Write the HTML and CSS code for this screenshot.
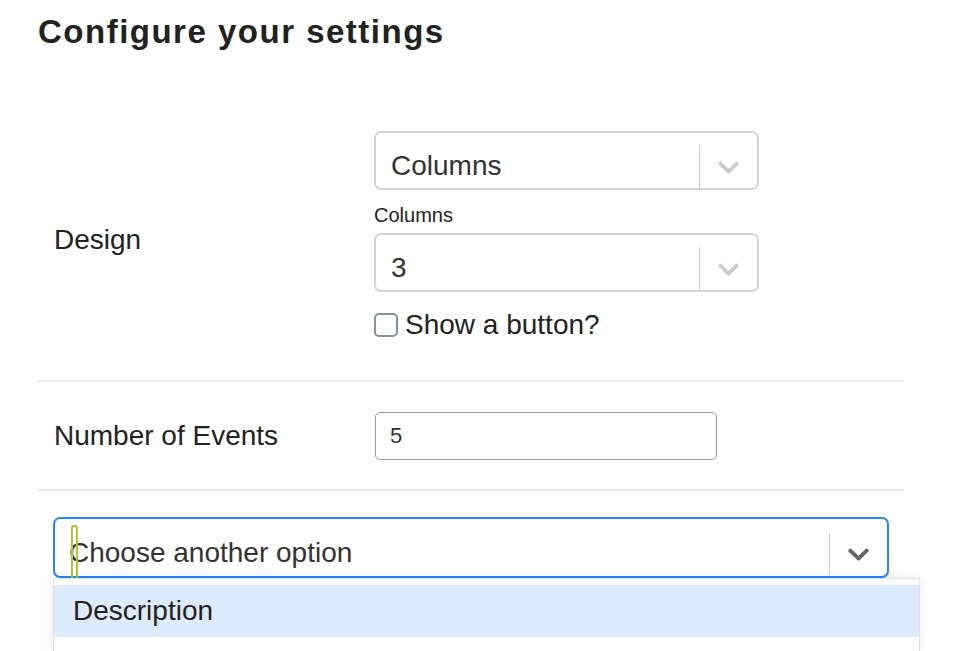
FILE: index.html
```html
<!DOCTYPE html>
<html lang="en">
<head>
    <meta charset="UTF-8">
    <meta name="viewport" content="width=device-width, initial-scale=1.0">
    <title>Configure your settings</title>
    <link rel="stylesheet" href="styles.css">
</head>
<body>
    <div class="page">
        <h1>Configure your settings</h1>

        <div class="settings">
            <div class="row">
                <div class="row-label">Design</div>
                <div class="field">
                    <div class="select">
                        <div class="select-value">Columns</div>
                        <span class="select-sep"></span>
                        <span class="select-arrow">
                            <svg viewBox="0 0 20 20"><path d="M4.516 7.548c0.436-0.446 1.043-0.481 1.576 0l3.908 3.747 3.908-3.747c0.533-0.481 1.141-0.446 1.574 0 0.436 0.445 0.408 1.197 0 1.615-0.406 0.418-4.695 4.502-4.695 4.502-0.217 0.223-0.502 0.335-0.787 0.335s-0.57-0.112-0.789-0.335c0 0-4.287-4.084-4.695-4.502s-0.436-1.17 0-1.615z"/></svg>
                        </span>
                    </div>
                    <label class="small-label">Columns</label>
                    <div class="select">
                        <div class="select-value">3</div>
                        <span class="select-sep"></span>
                        <span class="select-arrow">
                            <svg viewBox="0 0 20 20"><path d="M4.516 7.548c0.436-0.446 1.043-0.481 1.576 0l3.908 3.747 3.908-3.747c0.533-0.481 1.141-0.446 1.574 0 0.436 0.445 0.408 1.197 0 1.615-0.406 0.418-4.695 4.502-4.695 4.502-0.217 0.223-0.502 0.335-0.787 0.335s-0.57-0.112-0.789-0.335c0 0-4.287-4.084-4.695-4.502s-0.436-1.17 0-1.615z"/></svg>
                        </span>
                    </div>
                    <label class="check">
                        <input type="checkbox">
                        <span>Show a button?</span>
                    </label>
                </div>
            </div>

            <div class="row">
                <div class="row-label">Number of Events</div>
                <div class="field">
                    <input class="number" type="text" value="5">
                </div>
            </div>

            <div class="row row-wide">
                <div class="dropdown">
                    <div class="select select-focused">
                        <span class="caret"></span>
                        <div class="select-value">Choose another option</div>
                        <span class="select-sep"></span>
                        <span class="select-arrow">
                            <svg viewBox="0 0 20 20"><path d="M4.516 7.548c0.436-0.446 1.043-0.481 1.576 0l3.908 3.747 3.908-3.747c0.533-0.481 1.141-0.446 1.574 0 0.436 0.445 0.408 1.197 0 1.615-0.406 0.418-4.695 4.502-4.695 4.502-0.217 0.223-0.502 0.335-0.787 0.335s-0.57-0.112-0.789-0.335c0 0-4.287-4.084-4.695-4.502s-0.436-1.17 0-1.615z"/></svg>
                        </span>
                    </div>
                    <div class="menu">
                        <div class="option active">Description</div>
                    </div>
                </div>
            </div>
        </div>
    </div>
</body>
</html>
```

FILE: styles.css
```css
body {
    font-family: "Liberation Sans", Arial, sans-serif;
    background-color: #fff;
    color: #222;
    margin: 0;
    padding: 0;
}
.page {
    box-sizing: border-box;
    min-height: 651px;
    padding: 13px 0 0 38px;
    width: 904px;
}
h1 {
    margin: 0;
    font-size: 33px;
    line-height: 38px;
    letter-spacing: 1.5px;
    font-weight: bold;
    color: #222;
}
.settings {
    margin-top: 40px;
}
.row {
    display: grid;
    grid-template-columns: 320px 1fr;
    align-items: center;
    padding: 40px 16px 39px;
    border-bottom: 2px solid #e8e8e8;
}
.row:nth-child(2) {
    padding: 30px 16px 29px 16px;
}
.row-label {
    font-size: 28px;
    line-height: 32px;
    padding-top: 8px;
}
.row:nth-child(2) .row-label {
    padding-top: 0;
}
.row-wide {
    display: block;
    padding: 26px 15px 0;
    border-bottom: none;
}
.field {
    display: flex;
    flex-direction: column;
    align-items: flex-start;
}
.select {
    position: relative;
    display: flex;
    align-items: center;
    box-sizing: border-box;
    width: 385px;
    height: 59px;
    padding-top: 11px;
    border: 2px solid #d3d3d3;
    border-radius: 7px;
    background-color: #fff;
}
.select-value {
    flex: 1;
    padding-left: 15px;
    font-size: 28px;
    line-height: 32px;
    color: #333;
}
.select-sep {
    align-self: stretch;
    width: 1px;
    margin-top: 1px;
    background-color: #ccc;
}
.select-arrow {
    display: flex;
    padding: 0 11px;
}
.select-arrow svg {
    width: 35px;
    height: 35px;
    fill: #ccc;
}
.small-label {
    margin-top: 14px;
    margin-bottom: 6px;
    font-size: 20px;
    line-height: 23px;
    color: #222;
}
.check {
    display: flex;
    align-items: center;
    gap: 7px;
    margin-top: 17px;
    font-size: 28px;
    line-height: 32px;
}
.check input {
    appearance: none;
    margin: 0;
    width: 24px;
    height: 24px;
    border: 2px solid #8590a0;
    border-radius: 5px;
    background-color: #fff;
}
.number {
    box-sizing: border-box;
    width: 342px;
    height: 48px;
    margin-left: 1px;
    padding: 0 14px;
    border: 1.5px solid #8f98a4;
    border-radius: 5px;
    font-family: "Liberation Sans", Arial, sans-serif;
    font-size: 22px;
    color: #333;
}
.dropdown {
    position: relative;
}
.select-focused {
    width: 836px;
    height: 61px;
    padding-left: 0;
    border-color: #2684ff;
}
.select-focused .select-value {
    padding-left: 14px;
}
.select-focused .select-sep {
    margin-top: 3px;
    margin-bottom: 1px;
}
.select-focused .select-arrow svg {
    fill: #666;
}
.caret {
    position: absolute;
    left: 16px;
    top: 6px;
    width: 3px;
    height: 52px;
    border: 2px solid #b4c23c;
    border-radius: 3px;
}
.menu {
    position: absolute;
    left: 0;
    top: 61px;
    width: 867px;
    height: 73px;
    box-sizing: border-box;
    padding-top: 6px;
    border: 1px solid #e2e2e2;
    border-bottom: none;
    background-color: #fff;
    box-shadow: 0 0 10px rgba(0, 0, 0, 0.1);
    z-index: 1;
}
.option {
    padding: 10px 19px;
    font-size: 28px;
    line-height: 32px;
    color: #222;
}
.option.active {
    background-color: #deebff;
}
```
